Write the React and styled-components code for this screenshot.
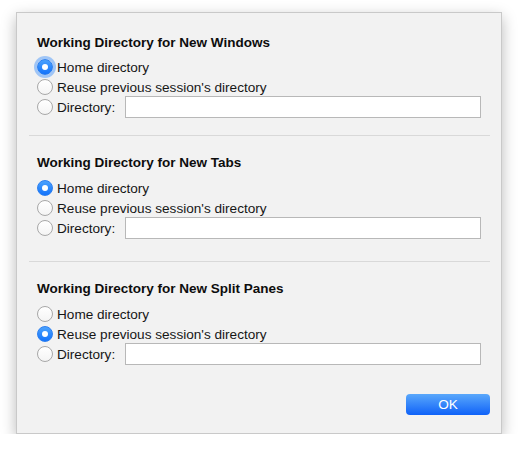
import React from 'react'
import styled, { createGlobalStyle } from 'styled-components'

const GlobalStyle = createGlobalStyle`
  body {
    margin: 0;
    background: #ffffff;
    font-family: "Liberation Sans", Arial, sans-serif;
  }
`;

const Dialog = styled.div`
  box-sizing: border-box;
  margin: 12px 0 0 16px;
  width: 486px;
  height: 422px;
  background: #f2f2f2;
  border: 1px solid #c9c9c9;
  box-shadow: 0 5px 14px rgba(0, 0, 0, 0.28);
  display: flex;
  flex-direction: column;
`;

const Section = styled.section`
  padding: ${p => p.$top}px 20px ${p => p.$bottom}px 20px;
  display: flex;
  flex-direction: column;
`;

const Heading = styled.h2`
  margin: 0 0 ${p => p.$gap}px 0;
  font-size: 13.5px;
  line-height: 16px;
  font-weight: bold;
  color: #0d0d0d;
`;

const Separator = styled.hr`
  margin: 0 11px 0 12px;
  border: none;
  border-top: 1px solid #d9d9d9;
  height: 0;
`;

const Row = styled.label`
  display: flex;
  align-items: center;
  height: 20px;
  font-size: 13.6px;
  color: #161616;
`;

const Radio = styled.span`
  box-sizing: border-box;
  width: 16px;
  height: 16px;
  border-radius: 50%;
  flex-shrink: 0;
  margin-right: 4px;
  display: flex;
  align-items: center;
  justify-content: center;
  background: ${p => (p.$on ? 'linear-gradient(#4ba2fd, #1373fb)' : 'linear-gradient(#ffffff, #f4f4f4)')};
  border: 1px solid ${p => (p.$on ? '#2c7ff0' : '#a8a8a8')};
  box-shadow: ${p => (p.$focus ? '0 0 0 3px rgba(91, 160, 250, 0.55)' : 'none')};
  &::after {
    content: '';
    display: ${p => (p.$on ? 'block' : 'none')};
    width: 6px;
    height: 6px;
    border-radius: 50%;
    background: #fff;
  }
`;

const PathInput = styled.input`
  box-sizing: border-box;
  margin-left: auto;
  width: 356px;
  height: 22px;
  border: 1px solid #b8b8b8;
  background: #fff;
  font: inherit;
  outline: none;
`;

const Footer = styled.div`
  margin-top: auto;
  padding: 0 11px 18px 0;
  display: flex;
  justify-content: flex-end;
`;

const OkButton = styled.button`
  width: 84px;
  height: 21px;
  border: none;
  border-radius: 4px;
  background: linear-gradient(#5aa8fb, #0f62f8);
  color: #fff;
  font-family: inherit;
  font-size: 13.6px;
  padding: 0;
`;

const sections = [
  { title: 'Working Directory for New Windows', picked: 0, focus: true, top: 22, gap: 6, bottom: 18 },
  { title: 'Working Directory for New Tabs', picked: 0, top: 19, gap: 7, bottom: 23 },
  { title: 'Working Directory for New Split Panes', picked: 1, top: 19, gap: 7, bottom: 0 },
];

const DirSection = ({ title, picked, focus, top, gap, bottom }) => (
  <Section $top={top} $bottom={bottom}>
    <Heading $gap={gap}>{title}</Heading>
    <Row>
      <Radio $on={picked === 0} $focus={focus} />
      Home directory
    </Row>
    <Row>
      <Radio $on={picked === 1} />
      Reuse previous session's directory
    </Row>
    <Row>
      <Radio $on={picked === 2} />
      Directory:
      <PathInput />
    </Row>
  </Section>
);

export default function App() {
  return (
    <>
      <GlobalStyle />
      <Dialog>
        {sections.map((s, i) => (
          <React.Fragment key={s.title}>
            {i > 0 && <Separator />}
            <DirSection {...s} />
          </React.Fragment>
        ))}
        <Footer>
          <OkButton>OK</OkButton>
        </Footer>
      </Dialog>
    </>
  );
}
